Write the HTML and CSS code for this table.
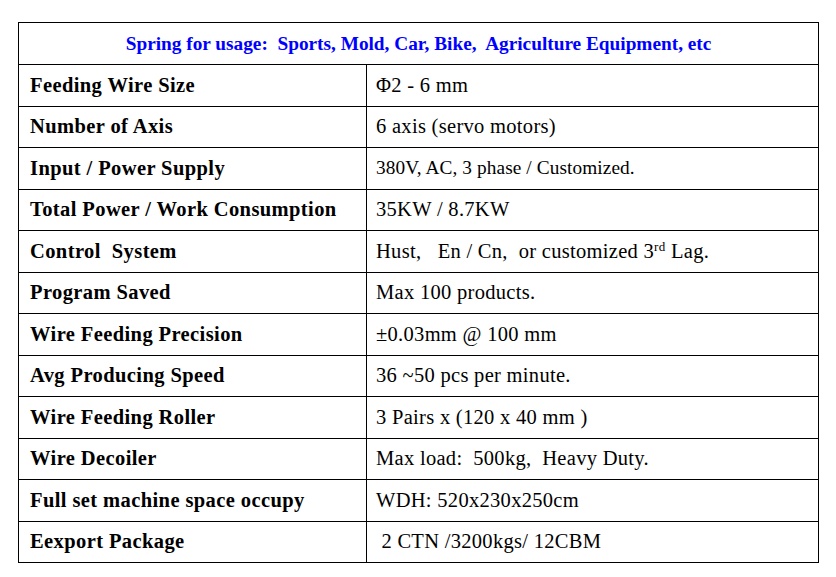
FILE: index.html
```html
<!DOCTYPE html>
<html>
<head>
<meta charset="utf-8">
<link rel="stylesheet" href="styles.css">
</head>
<body>
<table class="spec">
  <colgroup><col class="c1"><col class="c2"></colgroup>
  <tr class="head"><td colspan="2">Spring for usage:&nbsp; Sports, Mold, Car, Bike,&nbsp; Agriculture Equipment, etc</td></tr>
  <tr><td class="k">Feeding Wire Size</td><td class="v">Φ2 - 6 mm</td></tr>
  <tr><td class="k">Number of Axis</td><td class="v">6 axis (servo motors)</td></tr>
  <tr><td class="k">Input / Power Supply</td><td class="v small">380V, AC, 3 phase / Customized.</td></tr>
  <tr><td class="k">Total Power / Work Consumption</td><td class="v">35KW / 8.7KW</td></tr>
  <tr><td class="k">Control&nbsp; System</td><td class="v">Hust,&nbsp;&nbsp; En / Cn,&nbsp; or customized 3<sup>rd</sup> Lag.</td></tr>
  <tr><td class="k">Program Saved</td><td class="v">Max 100 products.</td></tr>
  <tr><td class="k">Wire Feeding Precision</td><td class="v">±0.03mm @ 100 mm</td></tr>
  <tr><td class="k">Avg Producing Speed</td><td class="v">36 ~50 pcs per minute.</td></tr>
  <tr><td class="k">Wire Feeding Roller</td><td class="v">3 Pairs x (120 x 40 mm )</td></tr>
  <tr><td class="k">Wire Decoiler</td><td class="v">Max load:&nbsp; 500kg,&nbsp; Heavy Duty.</td></tr>
  <tr><td class="k">Full set machine space occupy</td><td class="v">WDH: 520x230x250cm</td></tr>
  <tr><td class="k">Eexport Package</td><td class="v">&nbsp;2 CTN /3200kgs/ 12CBM</td></tr>
</table>
</body>
</html>
```

FILE: styles.css
```css
html, body {
  margin: 0;
  padding: 0;
  background: #fff;
}
body {
  padding: 22px 0 0 18px;
  font-family: "Liberation Serif", "Times New Roman", serif;
  color: #000;
}
.spec {
  border-collapse: collapse;
  width: 800px;
  table-layout: fixed;
}
.spec .c1 { width: 348px; }
.spec .c2 { width: 452px; }
.spec tr { height: 41.5px; }
.spec .head { height: 42px; }
.spec td {
  border: 1px solid #000;
  padding: 0 0 0 11px;
  vertical-align: middle;
  white-space: nowrap;
}
.spec .head td {
  text-align: center;
  color: #0000ff;
  font-weight: bold;
  font-size: 19.3px;
  padding: 0;
}
.spec .k {
  font-weight: bold;
  font-size: 20.5px;
  letter-spacing: 0.4px;
}
.spec .v {
  font-size: 20.5px;
  letter-spacing: 0.3px;
  padding-left: 9px;
}
.spec .v.small {
  font-size: 19.3px;
  letter-spacing: 0.1px;
}
.spec sup {
  font-size: 13px;
  line-height: 0;
  vertical-align: 7px;
}
```
